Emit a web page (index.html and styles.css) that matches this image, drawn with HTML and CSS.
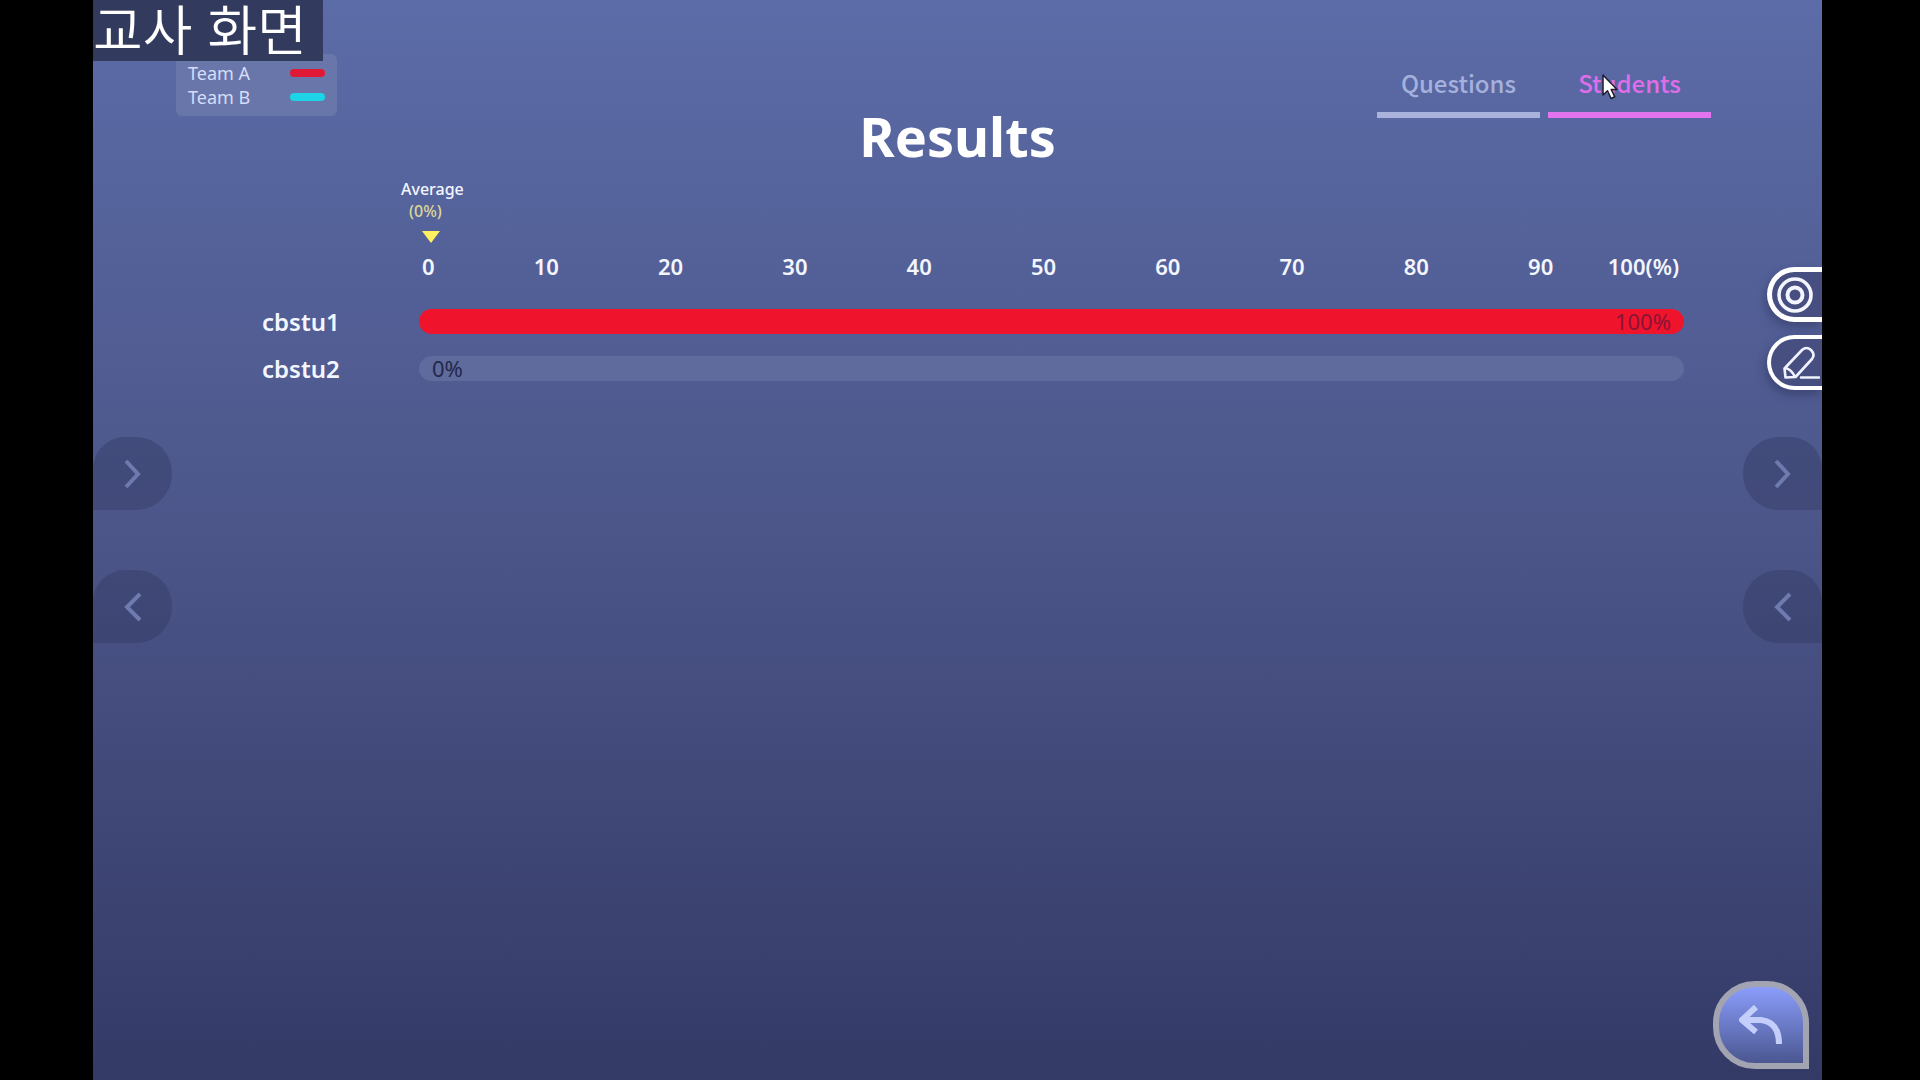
FILE: index.html
```html
<!DOCTYPE html>
<html lang="ko">
<head>
<meta charset="utf-8">
<meta name="viewport" content="width=device-width, initial-scale=1">
<title>Results</title>
<link rel="stylesheet" href="styles.css">
</head>
<body>
<main class="stage">
  <p class="screen-label">교사 화면</p>

  <header class="header">
    <ul class="legend">
      <li class="legend-item">Team A<span class="swatch swatch-a"></span></li>
      <li class="legend-item">Team B<span class="swatch swatch-b"></span></li>
    </ul>
    <h1 class="title">Results</h1>
    <nav class="tabs">
      <button class="tab" type="button">Questions</button>
      <button class="tab tab-active" type="button">Students
        <svg class="cursor" viewBox="0 0 16 26" aria-hidden="true"><path d="M1 1v20l4.500-4.200 3.600 7.700 3.600-1.700-3.500-7.400h5.800z" fill="#fff" stroke="#1c1c30" stroke-width="1.500" stroke-linejoin="round"/></svg>
      </button>
    </nav>
  </header>

  <section class="chart" aria-label="Student scores">
    <div class="average">
      <span class="average-name">Average</span>
      <span class="average-value">(0%)</span>
      <svg class="average-mark" viewBox="0 0 20 12" aria-hidden="true"><path d="M1 0h18l-9 12z" fill="#fff060"/></svg>
    </div>
    <div class="axis">
      <span>0</span><span>10</span><span>20</span><span>30</span><span>40</span><span>50</span><span>60</span><span>70</span><span>80</span><span>90</span><span>100(%)</span>
    </div>
    <span class="student">cbstu1</span>
    <div class="bar"><div class="fill" style="width:100%"></div><span class="score score-end">100%</span></div>
    <span class="student">cbstu2</span>
    <div class="bar"><span class="score">0%</span></div>
  </section>

  <div class="side side-left">
    <button class="side-button" type="button" aria-label="Next"><svg class="chevron" viewBox="0 0 20 30"><path d="M3 2l12 13L3 28"/></svg></button>
    <button class="side-button" type="button" aria-label="Previous"><svg class="chevron" viewBox="0 0 20 30"><path d="M17 2L4 15l13 13"/></svg></button>
  </div>
  <div class="side side-right">
    <button class="side-button" type="button" aria-label="Next page"><svg class="chevron" viewBox="0 0 20 30"><path d="M3 2l12 13L3 28"/></svg></button>
    <button class="side-button" type="button" aria-label="Previous page"><svg class="chevron" viewBox="0 0 20 30"><path d="M17 2L4 15l13 13"/></svg></button>
  </div>

  <div class="tools">
    <button class="tool tool-target" type="button" aria-label="Spotlight">
      <svg width="36" height="36" viewBox="0 0 36 36" fill="none" stroke="#f4f5ff"><circle cx="18" cy="18" r="16" stroke-width="3.600"/><circle cx="18" cy="18" r="7.500" stroke-width="4"/></svg>
    </button>
    <button class="tool tool-pen" type="button" aria-label="Pen">
      <svg width="38" height="36" viewBox="0 0 38 36" fill="none" stroke="#f0f2ff" stroke-width="2.600" stroke-linejoin="round" stroke-linecap="round"><path d="M2.500 23.500L20 5q4.500-4 9 0 4.500 4.500 1 9L13.500 32 3.500 32.500zM3 23q6 1 9.500 8M19 32.500h18"/></svg>
    </button>
  </div>

  <button class="back" type="button" aria-label="Back">
    <svg width="46" height="42" viewBox="0 0 46 42" fill="none" stroke="#c3cffa" stroke-width="6"><path d="M18 3L4 16l14 12" stroke-linejoin="round"/><path d="M5 16h18q18 2 18 24"/></svg>
  </button>
</main>
</body>
</html>
```
FILE: styles.css
```css
* {
  box-sizing: border-box;
}

body {
  margin: 0;
  padding: 0 98px 0 93px;
  background: #000;
  font-family: "Noto Sans", "Noto Sans CJK KR", sans-serif;
  color: #f4f6ff;
}

button {
  margin: 0;
  padding: 0;
  border: 0;
  background: none;
  font: inherit;
  color: inherit;
}

.stage {
  position: relative;
  min-height: 100vh;
  overflow: hidden;
  background: linear-gradient(#5c6ca8, #4b5588 50%, #343a66);
}

.screen-label {
  position: absolute;
  top: 0;
  left: 0;
  z-index: 2;
  width: 230px;
  height: 61px;
  margin: 0;
  background: #323a5e;
  color: #fff;
  font: 350 54px/56px "Noto Sans CJK KR", sans-serif;
  white-space: nowrap;
}

.header {
  display: grid;
  grid-template-columns: 1fr auto 1fr;
  align-items: start;
  padding-top: 54px;
}

.legend {
  width: 161px;
  margin: 0 0 0 83px;
  padding: 7px 12px;
  border-radius: 6px;
  background: #6976aa;
  color: #d5ddf8;
  font-size: 18px;
  line-height: 24px;
  list-style: none;
}

.legend-item {
  display: flex;
  align-items: center;
  justify-content: space-between;
}

.swatch {
  width: 35px;
  height: 8px;
  border-radius: 4px;
}

.swatch-a {
  background: #e01a36;
}

.swatch-b {
  background: #1dd3e6;
}

.title {
  margin: 0;
  padding-top: 52px;
  color: #fff;
  font-size: 54px;
  font-weight: 700;
  line-height: 60px;
}

.tabs {
  display: flex;
  justify-content: flex-end;
  gap: 8px;
  margin-right: 111px;
}

.tab {
  position: relative;
  width: 163px;
  height: 64px;
  border-bottom: 6px solid #a9b3dc;
  color: #a5b1dc;
  font: 500 24px/32px "Noto Sans CJK KR", sans-serif;
}

.tab-active {
  border-color: #e275ee;
  color: #e06de8;
}

.cursor {
  position: absolute;
  top: 20px;
  left: 54px;
  width: 16px;
  height: 26px;
}

.chart {
  display: grid;
  grid-template-columns: 157px 1fr;
  align-items: center;
  row-gap: 22px;
  padding: 12px 138px 0 169px;
}

.average {
  display: flex;
  flex-direction: column;
  grid-column: 2;
  width: 64px;
  margin-left: -18px;
  font-size: 16px;
  font-weight: 500;
  line-height: 22px;
}

.average-value {
  padding-left: 8px;
  color: #dcd795;
}

.average-mark {
  width: 20px;
  height: 12px;
  margin: 9px 0 0 20px;
}

.axis {
  display: grid;
  grid-column: 2;
  grid-template-columns: 65fr repeat(9, 124fr) 81fr;
  margin: -14px 0 6px;
  font-size: 22px;
  font-weight: 600;
  line-height: 30px;
  text-align: center;
}

.axis span:first-child {
  padding-left: 3px;
  text-align: left;
}

.student {
  font-size: 24px;
  font-weight: 600;
  line-height: 24px;
}

.bar {
  position: relative;
  height: 25px;
  border-radius: 13px;
  background: #5f6b9c;
}

.fill {
  height: 100%;
  border-radius: 13px;
  background: #ef132b;
}

.score {
  position: absolute;
  top: 0;
  left: 13px;
  color: #22284a;
  font-size: 22px;
  line-height: 25px;
}

.score-end {
  right: 13px;
  left: auto;
  color: #8a1438;
}

.side {
  position: absolute;
  top: 437px;
  display: grid;
  gap: 60px;
}

.side-left {
  left: 0;
}

.side-right {
  right: 0;
}

.side-button {
  display: grid;
  place-items: center;
  width: 79px;
  height: 73px;
  background: rgba(40, 45, 82, 0.3);
}

.side-left .side-button {
  border-radius: 32px 36px 36px 0;
}

.side-right .side-button {
  border-radius: 36px 32px 0 36px;
}

.chevron {
  width: 20px;
  height: 30px;
  fill: none;
  stroke: #6f7bae;
  stroke-width: 4;
}

.tools {
  position: absolute;
  top: 267px;
  right: 0;
  display: grid;
  gap: 13px;
}

.tool {
  display: flex;
  align-items: center;
  width: 55px;
  height: 55px;
  border: 5px solid #fff;
  border-right: 0;
  border-radius: 28px 0 0 28px;
  background: #474f80;
  box-shadow: -2px 5px 10px rgba(35, 40, 75, 0.4);
}

.tool-target {
  padding-left: 5px;
}

.tool-pen {
  padding-left: 11px;
  border-width: 4px 0 4px 4px;
}

.back {
  position: absolute;
  right: 13px;
  bottom: 11px;
  display: grid;
  place-items: center;
  width: 96px;
  height: 88px;
  border: 6px solid #a3a4b2;
  border-radius: 42px 42px 0 42px;
  background: linear-gradient(#8a9dfb, #4b5791);
}
```
